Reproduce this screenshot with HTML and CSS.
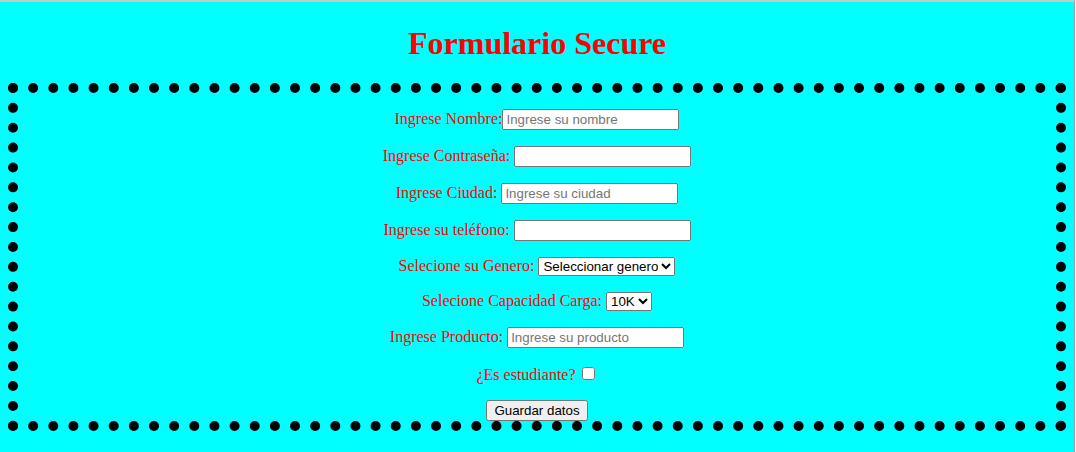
FILE: index.html
```html
<!DOCTYPE html>
<html lang="es">
<head>
    <meta charset="UTF-8">
    <title>Formulario Secure</title>
    <link rel="stylesheet" href="styles.css">
</head>
<body>
    <div class="page">
        <h1>Formulario Secure</h1>

        <form class="form-box">
            <p>Ingrese Nombre:<input type="text" placeholder="Ingrese su nombre"></p>
            <p>Ingrese Contraseña: <input type="password"></p>
            <p>Ingrese Ciudad: <input type="text" placeholder="Ingrese su ciudad"></p>
            <p>Ingrese su teléfono: <input type="tel"></p>
            <p>Selecione su Genero:
                <select>
                    <option>Seleccionar genero</option>
                    <option>Masculino</option>
                    <option>Femenino</option>
                </select>
            </p>
            <p>Selecione Capacidad Carga:
                <select>
                    <option>10K</option>
                    <option>20K</option>
                    <option>50K</option>
                </select>
            </p>
            <p>Ingrese Producto: <input type="text" placeholder="Ingrese su producto"></p>
            <p>¿Es estudiante?<input type="checkbox"></p>
            <button type="button">Guardar datos</button>
        </form>
    </div>
</body>
</html>
```

FILE: styles.css
```css
html, body { margin: 0; background: #f0f0f0; }

.page { width: 1058px; padding: 2px 8px 0 8px; min-height: 450px; background: #00ffff; border-top: 2px solid #c8c8c8; border-right: 1px solid #a0a0a0; font-family: "Liberation Serif", "Times New Roman", serif; }

h1 { color: red; text-align: center; font-size: 32px; margin: 21px 0; }

.form-box { border: 10px dotted #000; text-align: center; color: red; font-size: 16px; }
.form-box p { margin: 16px 0; }

input, select, button { font-family: "Liberation Sans", Arial, sans-serif; font-size: 13.33px; }
input[type="text"], input[type="password"], input[type="tel"] { width: 177px; height: 21px; box-sizing: border-box; }
input[type="checkbox"] { margin-left: 6px; }
select { height: 19px; }
button { height: 21px; }
```
